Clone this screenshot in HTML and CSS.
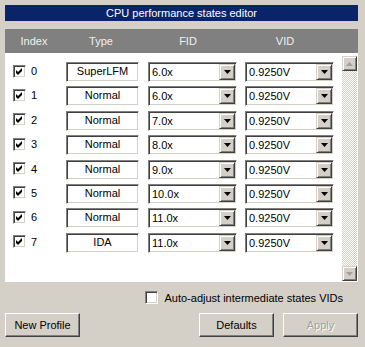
FILE: index.html
```html
<!DOCTYPE html>
<html>
<head>
<meta charset="utf-8">
<link rel="stylesheet" href="styles.css">
</head>
<body>
<div class="dlg">
  <div class="title">CPU performance states editor</div>
  <div class="head">
    <span class="h-idx">Index</span><span class="h-type">Type</span><span class="h-fid">FID</span><span class="h-vid">VID</span>
  </div>
  <div class="panel">
    <div class="rows">
      <div class="row"><span class="chk"><svg viewBox="0 0 7 7" width="7" height="7"><path d="M0 2L2 4L6 0V3L2 7L0 5Z"/></svg></span><span class="num">0</span><span class="type">SuperLFM</span><span class="combo fid"><span class="val">6.0x</span><span class="arrow"><svg viewBox="0 0 7 4" width="7" height="4"><path d="M0 0H7L3.5 4Z"/></svg></span></span><span class="combo vid"><span class="val">0.9250V</span><span class="arrow"><svg viewBox="0 0 7 4" width="7" height="4"><path d="M0 0H7L3.5 4Z"/></svg></span></span></div>
      <div class="row"><span class="chk"><svg viewBox="0 0 7 7" width="7" height="7"><path d="M0 2L2 4L6 0V3L2 7L0 5Z"/></svg></span><span class="num">1</span><span class="type">Normal</span><span class="combo fid"><span class="val">6.0x</span><span class="arrow"><svg viewBox="0 0 7 4" width="7" height="4"><path d="M0 0H7L3.5 4Z"/></svg></span></span><span class="combo vid"><span class="val">0.9250V</span><span class="arrow"><svg viewBox="0 0 7 4" width="7" height="4"><path d="M0 0H7L3.5 4Z"/></svg></span></span></div>
      <div class="row"><span class="chk"><svg viewBox="0 0 7 7" width="7" height="7"><path d="M0 2L2 4L6 0V3L2 7L0 5Z"/></svg></span><span class="num">2</span><span class="type">Normal</span><span class="combo fid"><span class="val">7.0x</span><span class="arrow"><svg viewBox="0 0 7 4" width="7" height="4"><path d="M0 0H7L3.5 4Z"/></svg></span></span><span class="combo vid"><span class="val">0.9250V</span><span class="arrow"><svg viewBox="0 0 7 4" width="7" height="4"><path d="M0 0H7L3.5 4Z"/></svg></span></span></div>
      <div class="row"><span class="chk"><svg viewBox="0 0 7 7" width="7" height="7"><path d="M0 2L2 4L6 0V3L2 7L0 5Z"/></svg></span><span class="num">3</span><span class="type">Normal</span><span class="combo fid"><span class="val">8.0x</span><span class="arrow"><svg viewBox="0 0 7 4" width="7" height="4"><path d="M0 0H7L3.5 4Z"/></svg></span></span><span class="combo vid"><span class="val">0.9250V</span><span class="arrow"><svg viewBox="0 0 7 4" width="7" height="4"><path d="M0 0H7L3.5 4Z"/></svg></span></span></div>
      <div class="row"><span class="chk"><svg viewBox="0 0 7 7" width="7" height="7"><path d="M0 2L2 4L6 0V3L2 7L0 5Z"/></svg></span><span class="num">4</span><span class="type">Normal</span><span class="combo fid"><span class="val">9.0x</span><span class="arrow"><svg viewBox="0 0 7 4" width="7" height="4"><path d="M0 0H7L3.5 4Z"/></svg></span></span><span class="combo vid"><span class="val">0.9250V</span><span class="arrow"><svg viewBox="0 0 7 4" width="7" height="4"><path d="M0 0H7L3.5 4Z"/></svg></span></span></div>
      <div class="row"><span class="chk"><svg viewBox="0 0 7 7" width="7" height="7"><path d="M0 2L2 4L6 0V3L2 7L0 5Z"/></svg></span><span class="num">5</span><span class="type">Normal</span><span class="combo fid"><span class="val">10.0x</span><span class="arrow"><svg viewBox="0 0 7 4" width="7" height="4"><path d="M0 0H7L3.5 4Z"/></svg></span></span><span class="combo vid"><span class="val">0.9250V</span><span class="arrow"><svg viewBox="0 0 7 4" width="7" height="4"><path d="M0 0H7L3.5 4Z"/></svg></span></span></div>
      <div class="row"><span class="chk"><svg viewBox="0 0 7 7" width="7" height="7"><path d="M0 2L2 4L6 0V3L2 7L0 5Z"/></svg></span><span class="num">6</span><span class="type">Normal</span><span class="combo fid"><span class="val">11.0x</span><span class="arrow"><svg viewBox="0 0 7 4" width="7" height="4"><path d="M0 0H7L3.5 4Z"/></svg></span></span><span class="combo vid"><span class="val">0.9250V</span><span class="arrow"><svg viewBox="0 0 7 4" width="7" height="4"><path d="M0 0H7L3.5 4Z"/></svg></span></span></div>
      <div class="row"><span class="chk"><svg viewBox="0 0 7 7" width="7" height="7"><path d="M0 2L2 4L6 0V3L2 7L0 5Z"/></svg></span><span class="num">7</span><span class="type">IDA</span><span class="combo fid"><span class="val">11.0x</span><span class="arrow"><svg viewBox="0 0 7 4" width="7" height="4"><path d="M0 0H7L3.5 4Z"/></svg></span></span><span class="combo vid"><span class="val">0.9250V</span><span class="arrow"><svg viewBox="0 0 7 4" width="7" height="4"><path d="M0 0H7L3.5 4Z"/></svg></span></span></div>
    </div>
    <div class="scroll">
      <span class="sbtn"><svg viewBox="0 0 7 4" width="7" height="4"><path d="M0 4H7L3.5 0Z"/></svg></span>
      <span class="track"></span>
      <span class="sbtn"><svg viewBox="0 0 7 4" width="7" height="4"><path d="M0 0H7L3.5 4Z"/></svg></span>
    </div>
  </div>
  <div class="auto"><span class="chk empty"></span><span class="auto-label">Auto-adjust intermediate states VIDs</span></div>
  <div class="buttons">
    <span class="btn">New Profile</span>
    <span class="spacer"></span>
    <span class="btn">Defaults</span>
    <span class="btn disabled">Apply</span>
  </div>
</div>
</body>
</html>
```
FILE: styles.css
```css
html, body {
  margin: 0;
  padding: 0;
  background: #d4d0c8;
}
body {
  font-family: "Liberation Sans", Arial, sans-serif;
  font-size: 11px;
  color: #000;
}
.dlg {
  padding: 5px 7px 0 5px;
  display: flex;
  flex-direction: column;
}
.title {
  height: 16px;
  line-height: 16px;
  background: #0a246a;
  color: #fff;
  text-align: center;
}
.head {
  margin-top: 8px;
  height: 24px;
  background: #808080;
  color: #f0f0f0;
  display: flex;
  align-items: center;
}
.head span { text-align: center; }
.h-idx { width: 58px; }
.h-type { width: 76px; }
.h-fid { width: 98px; }
.h-vid { width: 96px; }
.panel {
  height: 229px;
  background: #fff;
  display: flex;
}
.rows {
  flex: 1;
  padding-top: 9px;
  display: flex;
  flex-direction: column;
  gap: 4.4px;
}
.row {
  height: 20px;
  display: flex;
  align-items: center;
}
.chk {
  box-sizing: border-box;
  width: 13px;
  height: 13px;
  flex: none;
  background: #fff;
  border-top: 1px solid #808080;
  border-left: 1px solid #808080;
  border-right: 1px solid #fff;
  border-bottom: 1px solid #fff;
  box-shadow: inset 1px 1px 0 #404040, inset -1px -1px 0 #d4d0c8;
  display: flex;
  align-items: center;
  justify-content: center;
}
.chk svg path {
  fill: #000;
}
.row .chk {
  margin-left: 8px;
  margin-top: -2px;
}
.num {
  margin-left: 5px;
  width: 35px;
  margin-top: -2px;
}
.type, .combo {
  box-sizing: border-box;
  height: 20px;
  background: #fff;
  border-top: 1px solid #808080;
  border-left: 1px solid #808080;
  border-right: 1px solid #fff;
  border-bottom: 1px solid #fff;
  box-shadow: inset 1px 1px 0 #404040, inset -1px -1px 0 #d4d0c8;
}
.type {
  width: 73px;
  text-align: center;
  line-height: 17px;
}
.combo {
  width: 89px;
  display: flex;
  padding: 1px;
}
.fid { margin-left: 9px; }
.vid { margin-left: 8px; }
.val {
  flex: 1;
  padding-left: 2px;
  line-height: 16px;
}
.arrow, .sbtn {
  box-sizing: border-box;
  background: #d4d0c8;
  border-top: 1px solid #d4d0c8;
  border-left: 1px solid #d4d0c8;
  border-right: 1px solid #404040;
  border-bottom: 1px solid #404040;
  box-shadow: inset 1px 1px 0 #fff, inset -1px -1px 0 #808080;
  display: flex;
  align-items: center;
  justify-content: center;
}
.arrow {
  width: 16px;
  height: 16px;
}
.arrow svg path { fill: #000; }
.scroll {
  width: 15px;
  margin: 3px 1px 1px 0;
  display: flex;
  flex-direction: column;
}
.sbtn {
  height: 15px;
  width: 15px;
}
.sbtn svg path { fill: #a0a0a0; }
.track {
  flex: 1;
  background: repeating-conic-gradient(#fff 0 25%, #d4d0c8 0 50%) 0 0 / 2px 2px;
}
.auto {
  margin-top: 9px;
  height: 13px;
  display: flex;
  align-items: center;
  justify-content: flex-end;
  padding-right: 15px;
}
.auto-label {
  margin-left: 6px;
}
.buttons {
  margin-top: 9px;
  display: flex;
  gap: 9px;
}
.spacer { flex: 1; }
.btn {
  box-sizing: border-box;
  width: 75px;
  height: 24px;
  background: #d4d0c8;
  border-top: 1px solid #fff;
  border-left: 1px solid #fff;
  border-right: 1px solid #404040;
  border-bottom: 1px solid #404040;
  box-shadow: inset -1px -1px 0 #808080;
  display: flex;
  align-items: center;
  justify-content: center;
}
.btn.disabled {
  color: #a0a0a0;
  text-shadow: 1px 1px 0 #fff;
}
```
